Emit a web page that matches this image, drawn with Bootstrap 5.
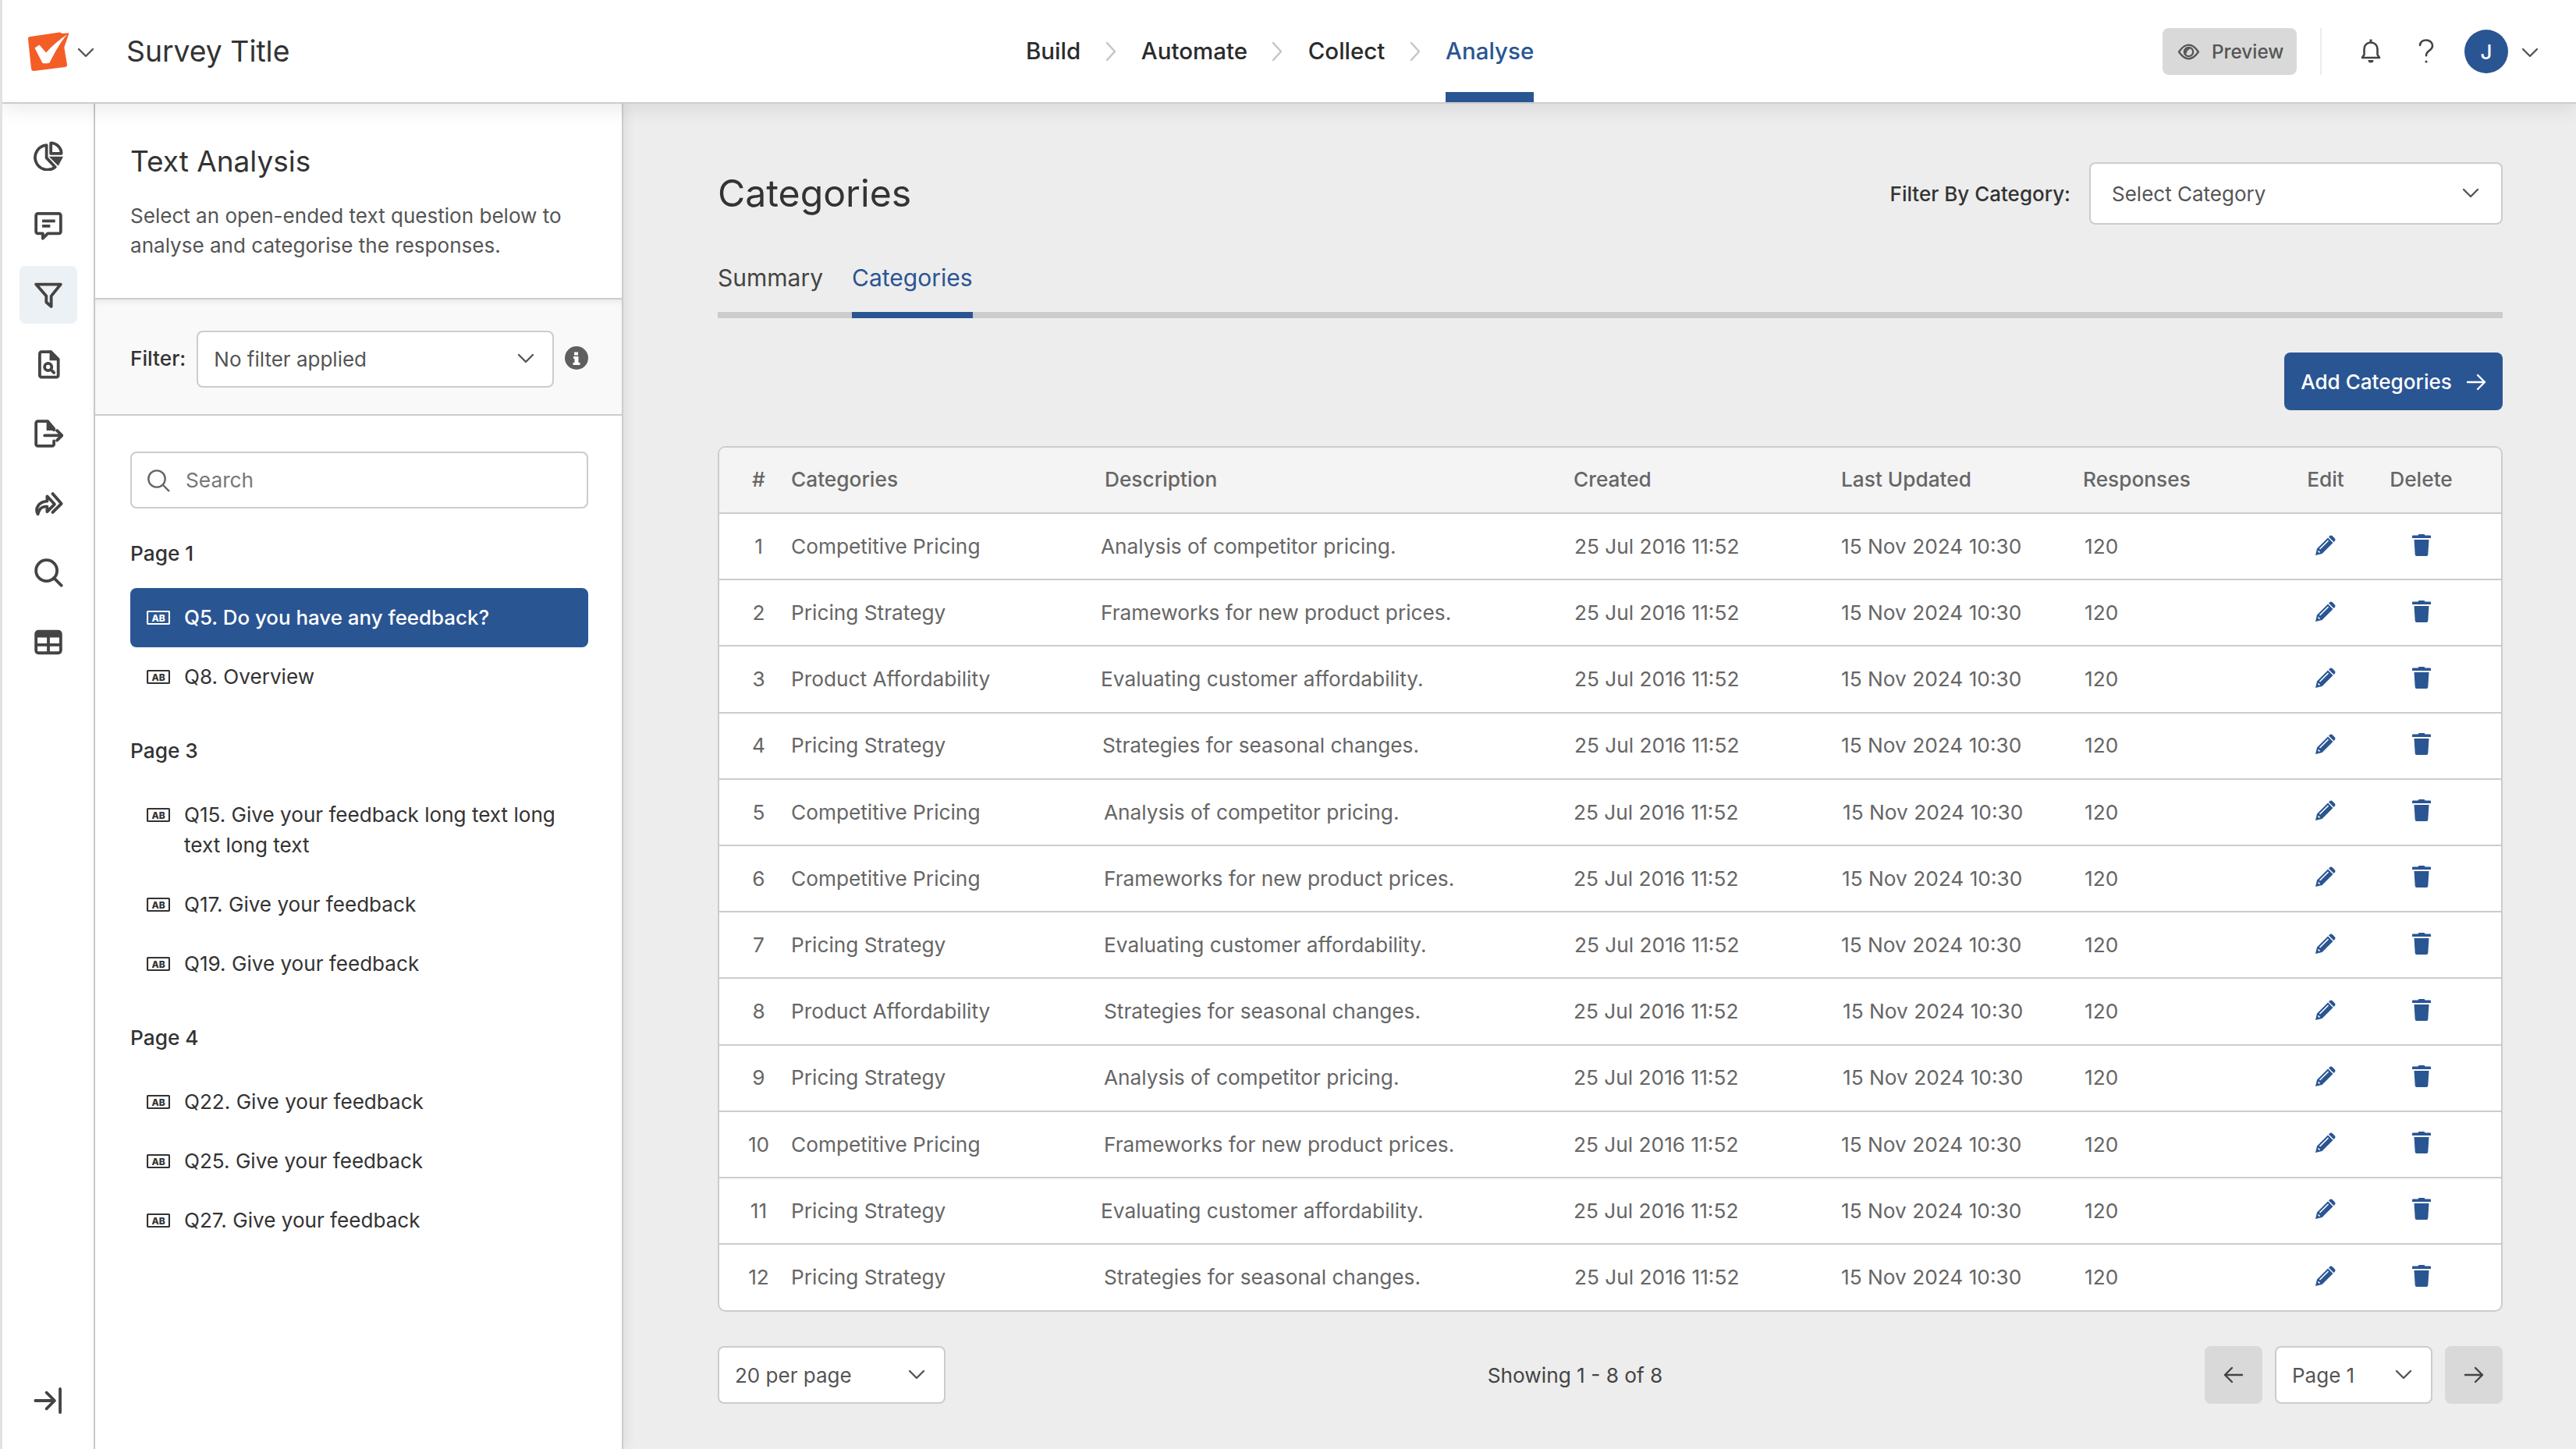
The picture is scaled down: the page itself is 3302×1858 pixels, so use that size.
<!doctype html>
<html lang="en">
<head>
<meta charset="utf-8">
<title>Survey Title - Text Analysis</title>
<link href="https://cdn.jsdelivr.net/npm/bootstrap@5.3.0/dist/css/bootstrap.min.css" rel="stylesheet">
<style>
html,body{height:100%;}
body{font-family:Inter,"Liberation Sans",sans-serif;background:#ededed;color:#333;font-size:26.25px;overflow:hidden;border-left:3px solid #e2e2e2;}
.app-shell{height:100vh;display:flex;flex-direction:column;}
.topbar{height:133px;flex:none;background:#fff;border-bottom:2px solid #ccc;box-shadow:0 4px 26px rgba(0,0,0,.1);position:relative;z-index:5;padding:0;flex-wrap:nowrap;align-items:stretch;justify-content:flex-start;}
.brand-side{flex:0 0 1312px;display:flex;align-items:center;padding-top:1px;}
.logo-svg{width:58px;height:58px;margin-left:30px;}
.chev-sm{width:22px;height:14px;margin-left:8px;margin-top:4px;}
.survey-name{font-size:37.3px;color:#333;margin-left:41px;line-height:1;}
.steps{display:flex;align-items:stretch;gap:31.3px;}
.step-item{display:flex;align-items:center;font-size:29.5px;font-weight:500;color:#2b2b2b;padding-bottom:3px;border-bottom:13px solid transparent;padding-top:16px;text-decoration:none;}
.step-item.on{color:#2a5593;border-bottom-color:#2a5593;}
.step-sep{width:15px;height:26px;align-self:center;}
.top-right{margin-left:auto;display:flex;align-items:center;padding:1px 48px 0 0;}
.btn-preview{height:60px;width:172px;background:#d9d9d9;border:0;border-radius:8px;color:#555;font-size:24.3px;font-weight:500;display:flex;align-items:center;gap:15px;padding:0 0 0 19px;}
.btn-preview svg{width:29px;height:25px;}
.v-rule{width:2px;height:60px;background:#ececec;margin:0 47px 0 30px;}
.tool-ic{width:32px;height:34px;color:#444;}
.ask-ic{width:32px;height:34px;margin-left:39px;color:#444;}
.face{width:56px;height:56px;border-radius:50%;background:#2a5593;color:#fff;font-size:26px;font-weight:500;margin-left:33px;display:flex;align-items:center;justify-content:center;}
.chev-user{width:22px;height:14px;margin-left:17px;margin-top:4px;}
.work-row{flex:1;display:flex;min-height:0;}
.rail{width:119px;flex:none;background:#fff;border-right:2px solid #ccc;display:flex;flex-direction:column;align-items:center;padding:0 0 25px 0;}
.rail-stack{display:flex;flex-direction:column;align-items:center;margin-top:30px;}
.rail-btn{width:74px;height:74px;border-radius:8px;display:flex;align-items:center;justify-content:center;color:#444;margin-bottom:15px;background:transparent;border:0;padding:0;}
.rail-btn.on{background:#ebf1f5;}
.rail-btn svg{width:38px;height:38px;}
.rail-btn.rail-end{margin:auto 0 0;}
.side-panel{width:677px;flex:none;background:#fff;border-right:2px solid #ccc;box-shadow:3px 0 14px rgba(0,0,0,.07);display:flex;flex-direction:column;position:relative;z-index:2;}
.panel-head{height:251px;flex:none;padding:49px 40px 0 45px;border-bottom:2px solid #ccc;}
.panel-title{font-size:37px;line-height:50px;font-weight:400;color:#333;margin:0 0 26px;}
.panel-desc{font-size:26.05px;line-height:38px;color:#555;margin:0;}
.filter-strip{height:149px;flex:none;background:#f9f9f9;border-bottom:2px solid #ccc;box-shadow:inset 0 7px 8px -5px rgba(0,0,0,.08);display:flex;align-items:center;padding:5px 0 0 45px;}
.filter-word{font-size:26.25px;font-weight:500;color:#333;margin-right:14px;}
.info-dot{width:30px;height:30px;margin-left:14px;margin-bottom:2px;}
.qs-area{padding:46px 43px 0 45px;flex:1;min-height:0;}
.find-box{height:73px;border:2px solid #ccc;border-radius:8px;background:#fff;display:flex;align-items:center;padding-left:18px;margin-bottom:38px;}
.find-box svg{width:32px;height:32px;flex:none;}
.find-box input{border:0;background:transparent;box-shadow:none;font-size:26.25px;padding:0 0 0 19px;color:#555;}
.find-box input::placeholder{color:#777;}
.find-box input:focus{box-shadow:none;}
.pg-label{font-size:26.25px;line-height:40px;font-weight:500;color:#333;margin:0 0 24px;}
.pg-label.later{margin-top:37px;}
.q-list{list-style:none;margin:0;padding:0;}
.q-row{min-height:76px;display:flex;align-items:center;padding:0 30px 0 21px;font-size:26.1px;line-height:38.5px;color:#333;border-radius:8px;gap:18px;}
.q-row.on{background:#2a5593;color:#fff;font-weight:500;font-size:25.9px;}
.q-row.tall{align-items:flex-start;padding-top:19px;padding-bottom:19px;}
.q-row.tall svg{margin-top:9px;}
.ab-ic{width:30px;height:20px;flex:none;}
.main-area{flex:1;min-width:0;padding:75px 94px 0 121px;}
.title-row{height:80px;display:flex;align-items:center;justify-content:space-between;}
.main-title{font-size:48.2px;font-weight:400;color:#333;margin:0;line-height:1;}
.cat-filter{display:flex;align-items:center;gap:24px;}
.cat-filter label{font-size:26px;font-weight:500;color:#333;}
.fine-select{border:2px solid #ccc;border-radius:8px;color:#555;font-size:26px;background-color:#fff;box-shadow:none;
 background-image:url("data:image/svg+xml,%3csvg xmlns='http://www.w3.org/2000/svg' viewBox='0 0 22 14'%3e%3cpath fill='none' stroke='%23555' stroke-width='2.4' stroke-linecap='round' stroke-linejoin='round' d='M2 2l9 9 9-9'/%3e%3c/svg%3e");
 background-size:22px 14px;}
.sel-cat{width:530px;height:80px;padding:0 60px 0 27px;background-position:right 28px center;}
.sel-flt{width:458px;height:73px;padding:0 50px 0 20px;background-position:right 23px center;}
.sel-per{width:292px;height:74px;padding:0 50px 0 20px;background-position:right 24px center;}
.sel-pag{width:202px;height:74px;padding:0 50px 0 20px;background-position:right 24px center;}
.tab-strip{margin-top:32px;height:88px;border-bottom:8px solid #ccc;gap:37px;flex-wrap:nowrap;}
.tab-strip .nav-link{padding:16px 0 0;height:88px;font-size:30px;line-height:40px;color:#444;border-bottom:8px solid transparent;}
.tab-strip .nav-link.active{color:#2a5593;border-bottom-color:#2a5593;}
.act-row{display:flex;justify-content:flex-end;margin:44px 0 46px;}
.btn-add{height:74px;width:280px;background:#2a5593;border:0;color:#fff;font-size:26.1px;font-weight:500;border-radius:8px;display:flex;align-items:center;justify-content:center;gap:18px;padding:2px 0 0;}
.btn-add svg{width:26px;height:24px;}
.grid-wrap{border:2px solid #ccc;border-radius:10px;overflow:hidden;background:#fff;}
.cat-table{table-layout:fixed;width:2285px;margin:0;font-size:26.25px;color:#666;--bs-table-color:#666;border-collapse:collapse;}
.cat-table th{height:84px;padding:0 0 1px;background:#f4f4f4;color:#666;font-weight:500;vertical-align:middle;border-bottom:2px solid #ccc;}
.cat-table td{height:85.2px;padding:0;vertical-align:middle;border-bottom:2px solid #ccc;color:#666;}
.cat-table tr:last-child td{border-bottom:0;}
.c-num{text-align:center;padding-left:9px!important;}
.d0{padding-left:0!important;}.d2{padding-left:2px!important;}.d4{padding-left:4px!important;}.dh{padding-left:5px!important;}
.dt1{padding-left:1px!important;}.ut2{padding-left:2px!important;}.ut1{padding-left:1px!important;}
.n-resp{padding-left:2px!important;}
.cat-table td.act-ic{text-align:center;color:#2a5593;}
.cat-table .del-c{padding-right:42px!important;}
.act-ic svg{display:inline-block;vertical-align:middle;}
.pen-ic{width:28px;height:28px;margin-bottom:8px;}
.bin-ic{width:24px;height:28px;margin-bottom:8px;}
.pager-row{display:flex;align-items:center;margin-top:44px;position:relative;}
.show-count{flex:1;text-align:center;font-size:26.25px;color:#444;}
.pager-ctl{display:flex;align-items:center;gap:16px;}
.pager-btn{width:74px;height:74px;background:#d9d9d9;border:0;border-radius:8px;display:flex;align-items:center;justify-content:center;padding:0;}
.pager-btn svg{width:26px;height:24px;}
</style>
</head>
<body>
<svg class="d-none" aria-hidden="true">
  <symbol id="i-ab" viewBox="0 0 30 20"><rect x="1" y="2" width="28" height="16" rx="1" fill="none" stroke="currentColor" stroke-width="2.200"/><text x="15" y="14.500" text-anchor="middle" font-size="12" font-weight="800" fill="currentColor" font-family="Inter,sans-serif">AB</text></symbol>
  <symbol id="i-pen" viewBox="0 0 28 28"><path fill="currentColor" d="M1 27 3 18.500 17 4.500 23.500 11 9.500 25ZM19 2.500a2.800 2.800 0 0 1 4 0l2.500 2.500a2.800 2.800 0 0 1 0 4L24.500 10l-6.500-6.500Z"/><path stroke="#fff" stroke-width="1.600" fill="none" d="M6.500 19 17.500 8M4.500 21.500 6.500 23.500"/></symbol>
  <symbol id="i-bin" viewBox="0 0 24 28"><path fill="currentColor" d="M9 0h6a1.500 1.500 0 0 1 1.500 1.500H23a1 1 0 0 1 1 1V5H0V2.500a1 1 0 0 1 1-1h6.500A1.500 1.500 0 0 1 9 0ZM2.500 7h19l-1.200 19a2 2 0 0 1-2 2H5.700a2 2 0 0 1-2-2Z"/></symbol>
</svg>
<div class="app-shell">
  <header class="navbar topbar">
    <div class="brand-side">
      <svg class="logo-svg" viewBox="33 38 58 58" aria-hidden="true">
        <path fill="#f45d26" stroke="#f45d26" stroke-width="6" stroke-linejoin="round" d="M39 51 76.500 45.500 83 84 43 89Z"/>
        <path fill="#f45d26" d="M76 44 88.500 43.500 81.500 64Z"/>
        <path fill="#fff" d="M44.500 62.500 50.500 58.500 59 68.500C65 62 75 52 86 45.500 77 55 70 69 63.500 81.500 60.500 82.500 57.500 82.500 54.500 82Z"/>
      </svg>
      <svg class="chev-sm" viewBox="0 0 22 14"><path fill="none" stroke="#555" stroke-width="2.400" stroke-linecap="round" stroke-linejoin="round" d="M2 2l9 9 9-9"/></svg>
      <span class="survey-name">Survey Title</span>
    </div>
    <nav class="steps">
      <a class="step-item" href="#">Build</a>
      <svg class="step-sep" viewBox="0 0 15 26"><path fill="none" stroke="#c4c4c4" stroke-width="2.400" stroke-linecap="round" stroke-linejoin="round" d="M2 2l10 11L2 24"/></svg>
      <a class="step-item" href="#">Automate</a>
      <svg class="step-sep" viewBox="0 0 15 26"><path fill="none" stroke="#c4c4c4" stroke-width="2.400" stroke-linecap="round" stroke-linejoin="round" d="M2 2l10 11L2 24"/></svg>
      <a class="step-item" href="#">Collect</a>
      <svg class="step-sep" viewBox="0 0 15 26"><path fill="none" stroke="#c4c4c4" stroke-width="2.400" stroke-linecap="round" stroke-linejoin="round" d="M2 2l10 11L2 24"/></svg>
      <a class="step-item on" href="#">Analyse</a>
    </nav>
    <div class="top-right">
      <button class="btn btn-preview" type="button">
        <svg viewBox="0 0 28 24" fill="none" stroke="#555" stroke-width="2.200"><path d="M2 12C6 6 9.500 3.500 14 3.500S22 6 26 12c-4 6-7.500 8.500-12 8.500S6 18 2 12Z"/><circle cx="14" cy="12" r="5.500"/><path fill="#555" stroke="none" d="M14 7.500a4.500 4.500 0 0 0-3 7.800c.5-3.500 1.500-5.500 5-7Z"/></svg>
        Preview
      </button>
      <div class="v-rule"></div>
      <svg class="tool-ic" viewBox="0 0 32 34" fill="none" stroke="currentColor" stroke-width="2.600" stroke-linejoin="round"><path d="M5 25h22l-2.500-4V14c0-5-3.500-8.500-8.500-8.500S7.500 9 7.500 14v7Z"/><path fill="currentColor" stroke="none" d="M14.500 1.500h3v4h-3zM12.500 28h7a3.500 3.500 0 0 1-7 0Z"/></svg>
      <svg class="ask-ic" viewBox="0 0 32 34" fill="none" stroke="currentColor" stroke-width="2.600" stroke-linecap="round"><path d="M8 9c.5-4 3.500-6.500 8-6.500 4.500 0 8 2.800 8 7 0 3.500-2 5-4.500 6.800-2 1.500-3.500 2.700-3.500 6"/><circle cx="16" cy="30" r="1.600" fill="currentColor" stroke="none"/></svg>
      <span class="face">J</span>
      <svg class="chev-user" viewBox="0 0 22 14"><path fill="none" stroke="#555" stroke-width="2.400" stroke-linecap="round" stroke-linejoin="round" d="M2 2l9 9 9-9"/></svg>
    </div>
  </header>

  <div class="work-row">
    <aside class="rail">
      <div class="rail-stack">
        <button class="rail-btn" type="button" aria-label="Dashboard"><svg viewBox="0 0 24 24" fill="none" stroke="currentColor" stroke-width="2.400" stroke-linejoin="round"><path d="M10.500 3.200A10 10 0 1 0 17.500 21L10.500 13.500Z"/><path d="M14 1.500a8.500 8.500 0 0 1 8.500 8.500H14Z"/><path fill="currentColor" stroke="none" d="M12.500 12.500H24L20 20Z"/></svg></button>
        <button class="rail-btn" type="button" aria-label="Comments"><svg viewBox="0 0 24 24" fill="none" stroke="currentColor" stroke-width="2.400" stroke-linejoin="round"><path d="M3.500 2.500h17a1.500 1.500 0 0 1 1.500 1.500v13a1.500 1.500 0 0 1-1.500 1.500H11.500l-4 4v-4h-4A1.500 1.500 0 0 1 2 17V4a1.500 1.500 0 0 1 1.500-1.500Z"/><path d="M7 8.500h10.500M7 12.500h6.500"/></svg></button>
        <button class="rail-btn on" type="button" aria-label="Filter"><svg viewBox="0 0 24 24" fill="none" stroke="currentColor" stroke-width="2.400" stroke-linejoin="round"><path d="M2 3.500h20l-7.700 9.500v8.500l-4-3.500V13Z"/></svg></button>
        <button class="rail-btn" type="button" aria-label="Report"><svg viewBox="0 0 24 24" fill="none" stroke="currentColor" stroke-width="2.400" stroke-linejoin="round"><path d="M6.500 2h7.500l6 6v13a1.500 1.500 0 0 1-1.500 1.500h-12A1.500 1.500 0 0 1 5 21V3.500A1.500 1.500 0 0 1 6.500 2Z"/><path fill="currentColor" stroke="none" d="M13 1h1.500L21 8v1h-8Z"/><circle cx="11.800" cy="14.200" r="2.900"/><path stroke-linecap="round" d="M14 16.400l2.500 2.500"/></svg></button>
        <button class="rail-btn" type="button" aria-label="Export"><svg viewBox="0 0 24 24" fill="none" stroke="currentColor" stroke-width="2.400" stroke-linejoin="round" stroke-linecap="round"><path d="M16.500 9V8L11.500 2H3.500A1.500 1.500 0 0 0 2 3.500v17A1.500 1.500 0 0 0 3.500 22h11.500a1.500 1.500 0 0 0 1.500-1.500V18"/><path fill="currentColor" stroke="none" d="M10.500 1.500h1.500l5.500 6.500v1.500h-7Z"/><path d="M9 13.500h14M19 9.500l4 4-4 4"/></svg></button>
        <button class="rail-btn" type="button" aria-label="Share"><svg viewBox="0 0 24 24" fill="none" stroke="currentColor" stroke-width="2.400" stroke-linejoin="round" stroke-linecap="round"><path d="M3.500 21c-2.500-4.500.5-10 7.500-10.500V6.500l6 6.500-6 6v-4c-3.500-.5-6 .5-7.500 6Z"/><path d="M15.500 4.500l7 8-7 7"/></svg></button>
        <button class="rail-btn" type="button" aria-label="Search"><svg viewBox="0 0 24 24" fill="none" stroke="currentColor" stroke-width="2.400" stroke-linecap="round"><circle cx="10.500" cy="10.500" r="8.500"/><path d="M16.500 16.500 22.500 22.500"/></svg></button>
        <button class="rail-btn" type="button" aria-label="Table"><svg viewBox="0 0 24 24" fill="none" stroke="currentColor" stroke-width="2.400" stroke-linejoin="round"><rect x="2" y="3.500" width="20" height="17.500" rx="2"/><path fill="currentColor" stroke="none" d="M2 3.500h20v5H2Z"/><path d="M2 14.500h20M12 8v13"/></svg></button>
      </div>
      <button class="rail-btn rail-end" type="button" aria-label="Collapse"><svg viewBox="0 0 24 24" fill="none" stroke="currentColor" stroke-width="2.400" stroke-linecap="round" stroke-linejoin="round"><path d="M1.500 12h15M10.500 5.500l6.500 6.500-6.500 6.500M21.500 2.500v19"/></svg></button>
    </aside>

    <section class="side-panel">
      <div class="panel-head">
        <h2 class="panel-title">Text Analysis</h2>
        <p class="panel-desc">Select an open-ended text question below to analyse and categorise the responses.</p>
      </div>
      <div class="filter-strip">
        <span class="filter-word">Filter:</span>
        <select class="form-select fine-select sel-flt" aria-label="Filter"><option>No filter applied</option></select>
        <svg class="info-dot" viewBox="0 0 30 30"><circle cx="15" cy="15" r="15" fill="#5f5f5f"/><path fill="#fff" d="M12 7.500h5v4h-5zM11 13h6.500v8h2v3h-9v-3h2v-5h-1.500Z"/></svg>
      </div>
      <div class="qs-area">
        <div class="find-box">
          <svg viewBox="0 0 24 24" fill="none" stroke="#666" stroke-width="1.800" stroke-linecap="round"><circle cx="10.500" cy="10.500" r="8"/><path d="M16.500 16.500 22 22"/></svg>
          <input class="form-control" type="text" placeholder="Search" aria-label="Search">
        </div>
        <p class="pg-label">Page 1</p>
        <ul class="q-list">
          <li class="q-row on"><svg class="ab-ic"><use href="#i-ab"/></svg>Q5. Do you have any feedback?</li>
          <li class="q-row"><svg class="ab-ic"><use href="#i-ab"/></svg>Q8. Overview</li>
        </ul>
        <p class="pg-label later">Page 3</p>
        <ul class="q-list">
          <li class="q-row tall"><svg class="ab-ic"><use href="#i-ab"/></svg><span>Q15. Give your feedback long text long text long text</span></li>
          <li class="q-row"><svg class="ab-ic"><use href="#i-ab"/></svg>Q17. Give your feedback</li>
          <li class="q-row"><svg class="ab-ic"><use href="#i-ab"/></svg>Q19. Give your feedback</li>
        </ul>
        <p class="pg-label later">Page 4</p>
        <ul class="q-list">
          <li class="q-row"><svg class="ab-ic"><use href="#i-ab"/></svg>Q22. Give your feedback</li>
          <li class="q-row"><svg class="ab-ic"><use href="#i-ab"/></svg>Q25. Give your feedback</li>
          <li class="q-row"><svg class="ab-ic"><use href="#i-ab"/></svg>Q27. Give your feedback</li>
        </ul>
      </div>
    </section>

    <main class="main-area">
      <div class="title-row">
        <h1 class="main-title">Categories</h1>
        <div class="cat-filter">
          <label for="catSel">Filter By Category:</label>
          <select id="catSel" class="form-select fine-select sel-cat"><option>Select Category</option></select>
        </div>
      </div>
      <ul class="nav tab-strip">
        <li class="nav-item"><a class="nav-link" href="#">Summary</a></li>
        <li class="nav-item"><a class="nav-link active" href="#">Categories</a></li>
      </ul>
      <div class="act-row">
        <button class="btn btn-add" type="button">Add Categories
          <svg viewBox="0 0 26 24" fill="none" stroke="#fff" stroke-width="2.400" stroke-linecap="round" stroke-linejoin="round"><path d="M2 12h22M15 3l9 9-9 9"/></svg>
        </button>
      </div>
      <div class="grid-wrap">
        <table class="table cat-table">
          <colgroup><col style="width:92px"><col style="width:397px"><col style="width:606px"><col style="width:343px"><col style="width:310px"><col style="width:250px"><col style="width:122px"><col style="width:165px"></colgroup>
          <thead><tr><th class="c-num">#</th><th>Categories</th><th class="dh">Description</th><th>Created</th><th>Last Updated</th><th>Responses</th><th class="text-center">Edit</th><th class="text-center del-c">Delete</th></tr></thead>
          <tbody>
            <tr><td class="c-num">1</td><td>Competitive Pricing</td><td class="d0">Analysis of competitor pricing.</td><td class="dt1">25 Jul 2016 11:52</td><td>15 Nov 2024 10:30</td><td class="n-resp">120</td><td class="act-ic"><svg class="pen-ic"><use href="#i-pen"/></svg></td><td class="act-ic del-c"><svg class="bin-ic"><use href="#i-bin"/></svg></td></tr>
            <tr><td class="c-num">2</td><td>Pricing Strategy</td><td class="d0">Frameworks for new product prices.</td><td class="dt1">25 Jul 2016 11:52</td><td>15 Nov 2024 10:30</td><td class="n-resp">120</td><td class="act-ic"><svg class="pen-ic"><use href="#i-pen"/></svg></td><td class="act-ic del-c"><svg class="bin-ic"><use href="#i-bin"/></svg></td></tr>
            <tr><td class="c-num">3</td><td>Product Affordability</td><td class="d0">Evaluating customer affordability.</td><td class="dt1">25 Jul 2016 11:52</td><td>15 Nov 2024 10:30</td><td class="n-resp">120</td><td class="act-ic"><svg class="pen-ic"><use href="#i-pen"/></svg></td><td class="act-ic del-c"><svg class="bin-ic"><use href="#i-bin"/></svg></td></tr>
            <tr><td class="c-num">4</td><td>Pricing Strategy</td><td class="d2">Strategies for seasonal changes.</td><td class="dt1">25 Jul 2016 11:52</td><td>15 Nov 2024 10:30</td><td class="n-resp">120</td><td class="act-ic"><svg class="pen-ic"><use href="#i-pen"/></svg></td><td class="act-ic del-c"><svg class="bin-ic"><use href="#i-bin"/></svg></td></tr>
            <tr><td class="c-num">5</td><td>Competitive Pricing</td><td class="d4">Analysis of competitor pricing.</td><td>25 Jul 2016 11:52</td><td class="ut2">15 Nov 2024 10:30</td><td class="n-resp">120</td><td class="act-ic"><svg class="pen-ic"><use href="#i-pen"/></svg></td><td class="act-ic del-c"><svg class="bin-ic"><use href="#i-bin"/></svg></td></tr>
            <tr><td class="c-num">6</td><td>Competitive Pricing</td><td class="d4">Frameworks for new product prices.</td><td>25 Jul 2016 11:52</td><td class="ut1">15 Nov 2024 10:30</td><td class="n-resp">120</td><td class="act-ic"><svg class="pen-ic"><use href="#i-pen"/></svg></td><td class="act-ic del-c"><svg class="bin-ic"><use href="#i-bin"/></svg></td></tr>
            <tr><td class="c-num">7</td><td>Pricing Strategy</td><td class="d4">Evaluating customer affordability.</td><td class="dt1">25 Jul 2016 11:52</td><td>15 Nov 2024 10:30</td><td class="n-resp">120</td><td class="act-ic"><svg class="pen-ic"><use href="#i-pen"/></svg></td><td class="act-ic del-c"><svg class="bin-ic"><use href="#i-bin"/></svg></td></tr>
            <tr><td class="c-num">8</td><td>Product Affordability</td><td class="d4">Strategies for seasonal changes.</td><td>25 Jul 2016 11:52</td><td class="ut2">15 Nov 2024 10:30</td><td class="n-resp">120</td><td class="act-ic"><svg class="pen-ic"><use href="#i-pen"/></svg></td><td class="act-ic del-c"><svg class="bin-ic"><use href="#i-bin"/></svg></td></tr>
            <tr><td class="c-num">9</td><td>Pricing Strategy</td><td class="d4">Analysis of competitor pricing.</td><td>25 Jul 2016 11:52</td><td class="ut2">15 Nov 2024 10:30</td><td class="n-resp">120</td><td class="act-ic"><svg class="pen-ic"><use href="#i-pen"/></svg></td><td class="act-ic del-c"><svg class="bin-ic"><use href="#i-bin"/></svg></td></tr>
            <tr><td class="c-num">10</td><td>Competitive Pricing</td><td class="d4">Frameworks for new product prices.</td><td>25 Jul 2016 11:52</td><td>15 Nov 2024 10:30</td><td class="n-resp">120</td><td class="act-ic"><svg class="pen-ic"><use href="#i-pen"/></svg></td><td class="act-ic del-c"><svg class="bin-ic"><use href="#i-bin"/></svg></td></tr>
            <tr><td class="c-num">11</td><td>Pricing Strategy</td><td class="d0">Evaluating customer affordability.</td><td>25 Jul 2016 11:52</td><td>15 Nov 2024 10:30</td><td class="n-resp">120</td><td class="act-ic"><svg class="pen-ic"><use href="#i-pen"/></svg></td><td class="act-ic del-c"><svg class="bin-ic"><use href="#i-bin"/></svg></td></tr>
            <tr><td class="c-num">12</td><td>Pricing Strategy</td><td class="d4">Strategies for seasonal changes.</td><td class="dt1">25 Jul 2016 11:52</td><td>15 Nov 2024 10:30</td><td class="n-resp">120</td><td class="act-ic"><svg class="pen-ic"><use href="#i-pen"/></svg></td><td class="act-ic del-c"><svg class="bin-ic"><use href="#i-bin"/></svg></td></tr>
          </tbody>
        </table>
      </div>
      <div class="pager-row">
        <select class="form-select fine-select sel-per" aria-label="Per page"><option>20 per page</option></select>
        <div class="show-count">Showing 1 - 8 of 8</div>
        <div class="pager-ctl">
          <button class="pager-btn" type="button" aria-label="Previous"><svg viewBox="0 0 26 24" fill="none" stroke="#444" stroke-width="2.400" stroke-linecap="round" stroke-linejoin="round"><path d="M24 12H2M11 3l-9 9 9 9"/></svg></button>
          <select class="form-select fine-select sel-pag" aria-label="Page"><option>Page 1</option></select>
          <button class="pager-btn" type="button" aria-label="Next"><svg viewBox="0 0 26 24" fill="none" stroke="#444" stroke-width="2.400" stroke-linecap="round" stroke-linejoin="round"><path d="M2 12h22M15 3l9 9-9 9"/></svg></button>
        </div>
      </div>
    </main>
  </div>
</div>
<script src="https://cdn.jsdelivr.net/npm/bootstrap@5.3.0/dist/js/bootstrap.bundle.min.js"></script>
</body>
</html>
